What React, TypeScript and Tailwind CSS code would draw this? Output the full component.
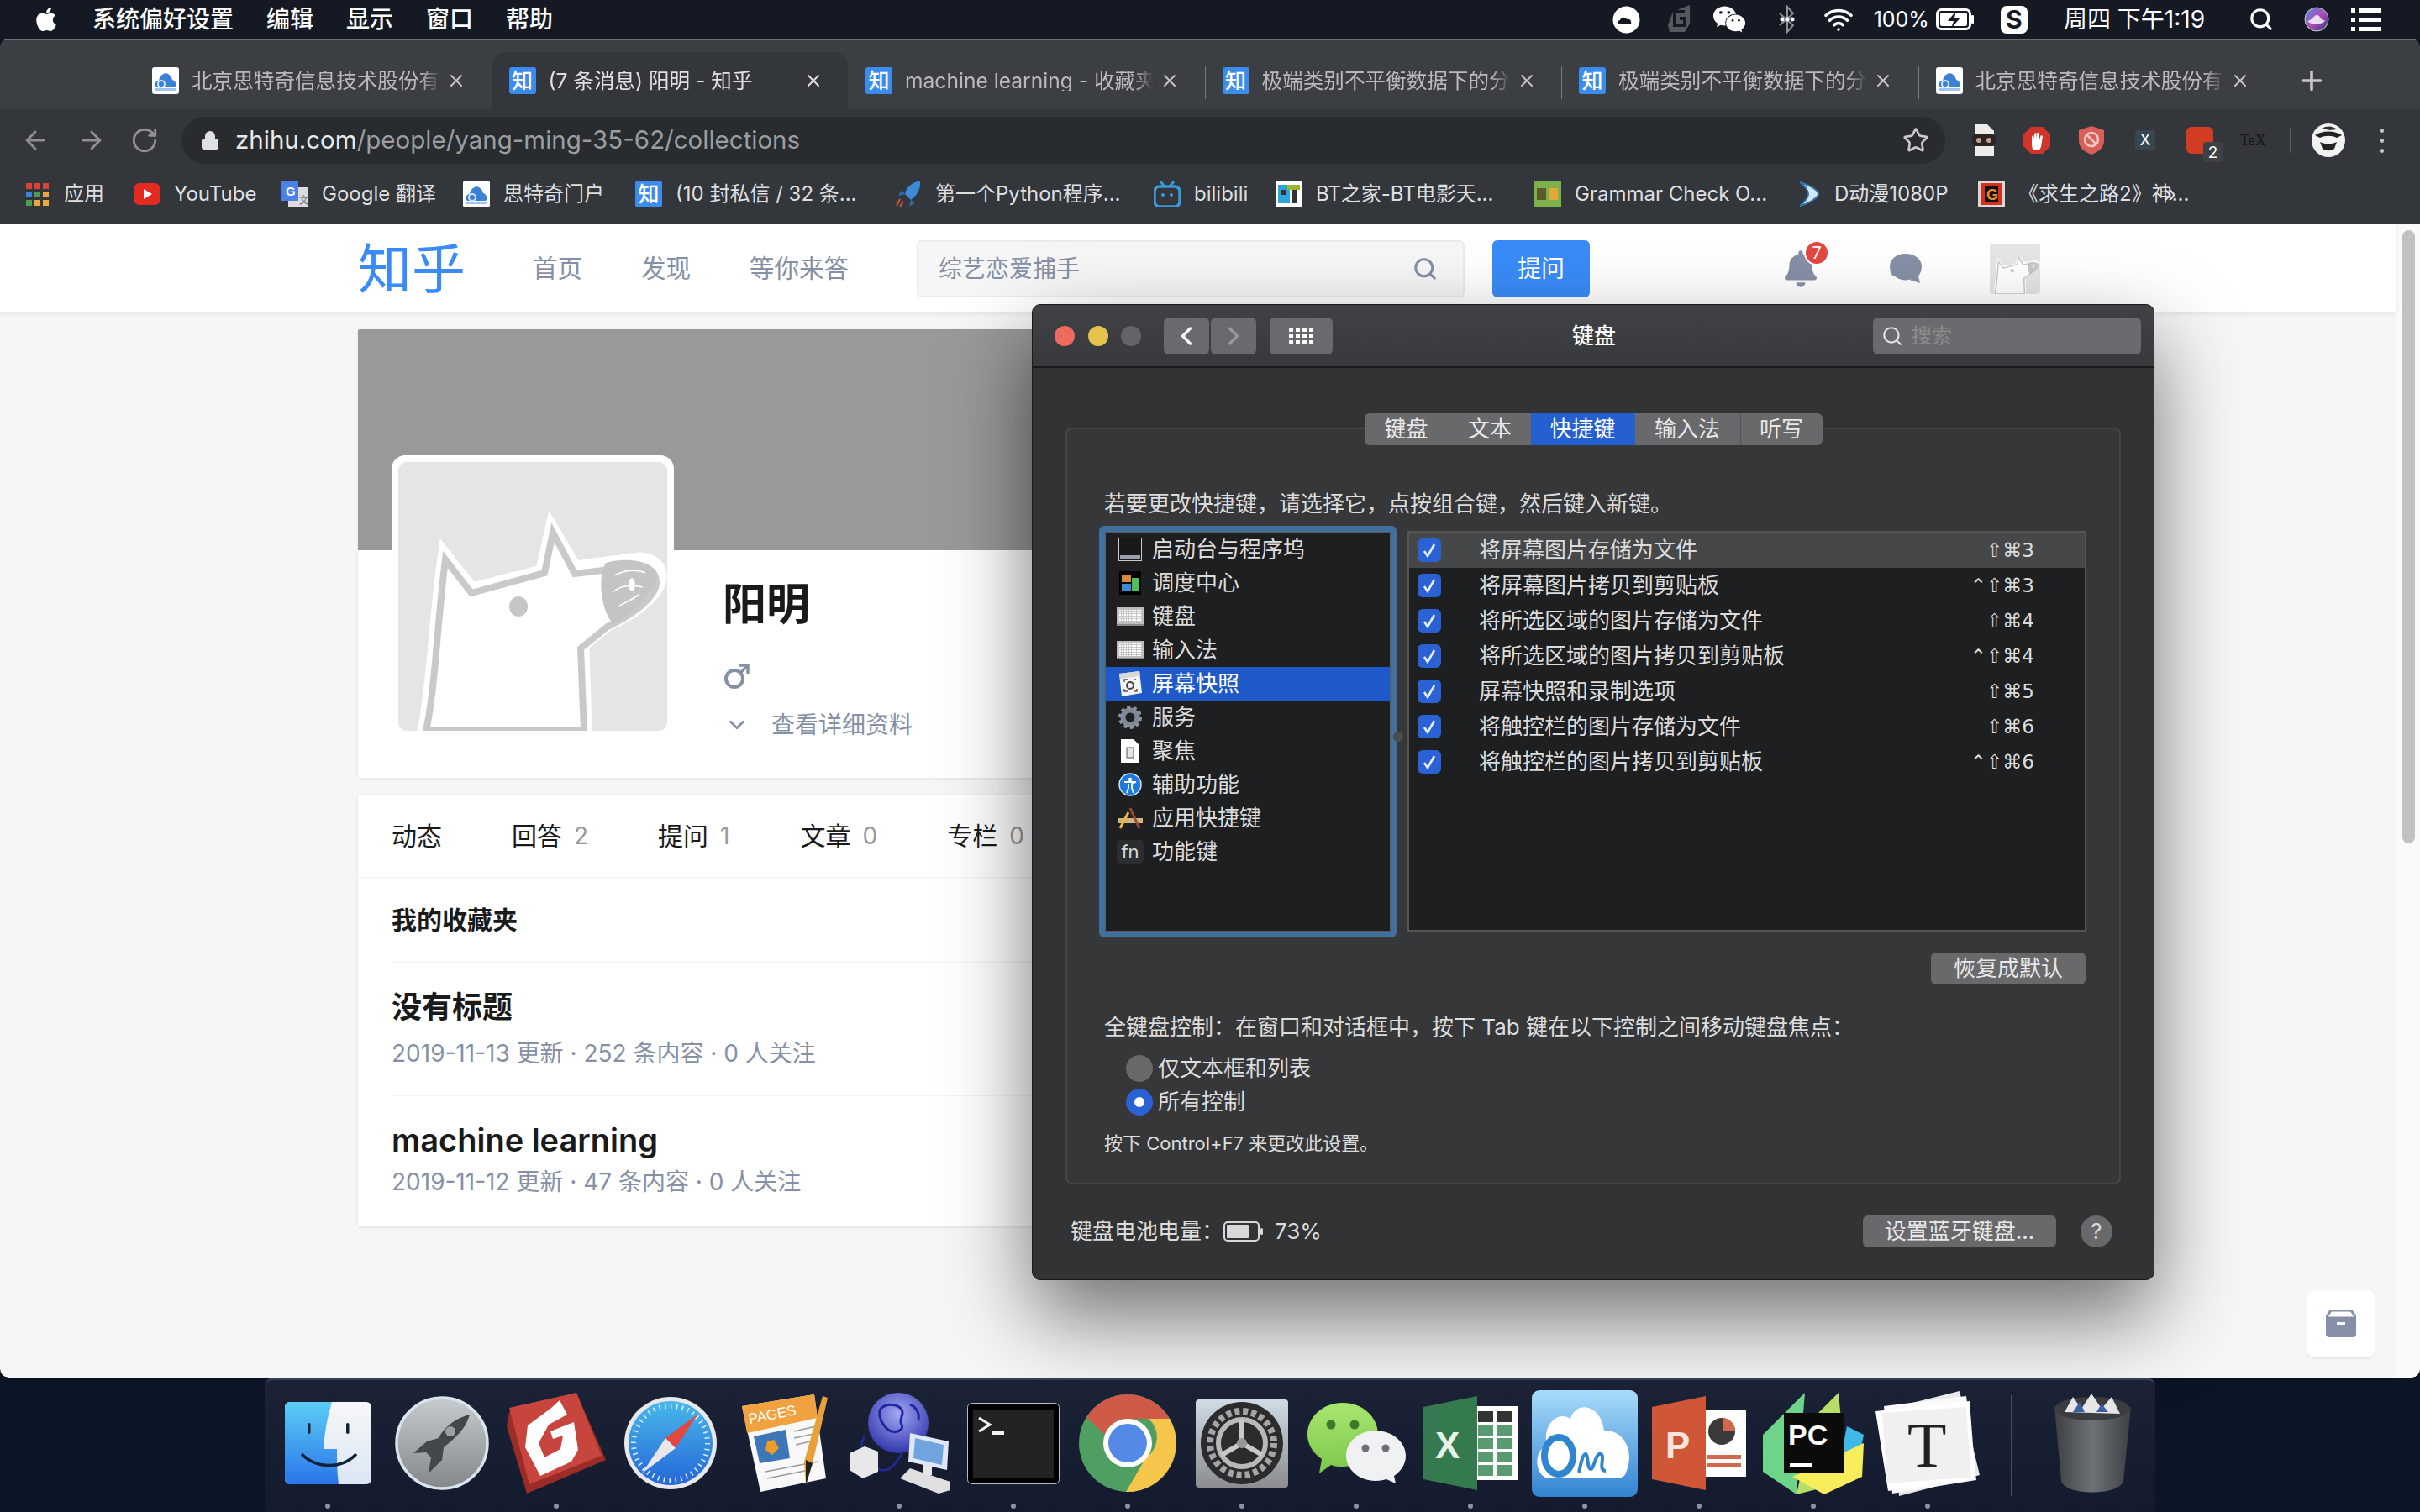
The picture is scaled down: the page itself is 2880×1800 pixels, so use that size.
import React from "react";
import { ArrowLeft, ArrowRight, RotateCw, Star, Search, X, Plus, Wifi, ChevronLeft, ChevronRight, ChevronDown, Lock } from "lucide-react";
import { FaApple, FaWeixin, FaBell } from "react-icons/fa";

const ZhiFav = () => (
  <div className="flex h-[32px] w-[32px] shrink-0 items-center justify-center rounded-[3px] bg-[#3b8ced] text-[25px] font-medium leading-none text-white">知</div>
);
const CloudFav = () => (
  <svg width="32" height="32" viewBox="0 0 32 32" className="shrink-0">
    <rect width="32" height="32" rx="3" fill="#fff" />
    <path d="M5 24c-3-3-1-8 3-8 1-5 4-8 8-9 5 1 7 4 8 8 4 1 6 6 3 9z" fill="#3b80d6" />
    <circle cx="11" cy="20" r="4" fill="none" stroke="#cfe3fa" strokeWidth="2" />
    <rect x="3" y="25" width="26" height="3" fill="#9ec5ef" />
  </svg>
);

const tabs: { k: string; t: string; active?: boolean }[] = [
  { k: "c", t: "北京思特奇信息技术股份有限公司" },
  { k: "z", t: "(7 条消息) 阳明 - 知乎", active: true },
  { k: "z", t: "machine learning - 收藏夹 - 知乎" },
  { k: "z", t: "极端类别不平衡数据下的分类问题" },
  { k: "z", t: "极端类别不平衡数据下的分类问题" },
  { k: "c", t: "北京思特奇信息技术股份有限公司" },
];

const MenuBar = () => (
  <div className="flex h-[46px] items-center bg-[#151923] text-white">
    <FaApple className="ml-[39px] h-[32px] w-[32px]" />
    <div className="ml-[39px] flex gap-[39px] text-[28px] font-medium leading-none">
      <span>系统偏好设置</span><span>编辑</span><span>显示</span><span>窗口</span><span>帮助</span>
    </div>
    <div className="ml-auto flex items-center">
      <svg width="33" height="33" viewBox="0 0 33 33"><circle cx="16.5" cy="16.5" r="16" fill="#fff" /><path d="M9 22c-3 0-3-5 0-5 1-4 7-4 8-1 4-1 6 2 5 6z" fill="#151923" /></svg>
      <svg width="30" height="34" viewBox="0 0 30 34" className="ml-[31px]"><path d="M8 8 28 0v22l-6 10H4l-2-8z" fill="#55585e" /><path d="M22 8H10v16h12v-8h-6" fill="none" stroke="#151923" strokeWidth="4" /></svg>
      <FaWeixin className="ml-[25px] h-[36px] w-[40px]" />
      <svg width="22" height="34" viewBox="0 0 22 34" className="ml-[38px]"><path d="m2 10 16 14-7 8V2l7 8L2 24" fill="none" stroke="#8f9298" strokeWidth="2" /><circle cx="5" cy="17" r="2.5" fill="#fff" /><circle cx="11" cy="17" r="2.5" fill="#fff" /><circle cx="17" cy="17" r="2.5" fill="#fff" /></svg>
      <Wifi className="ml-[30px] h-[36px] w-[40px]" strokeWidth={2.4} />
      <span className="ml-[22px] text-[25px] leading-none">100%</span>
      <svg width="46" height="26" viewBox="0 0 46 26" className="ml-[8px]"><rect x="1.5" y="1.5" width="39" height="23" rx="5" fill="none" stroke="#fff" strokeWidth="3" /><rect x="42" y="8" width="3" height="10" rx="1" fill="#fff" /><rect x="5" y="5" width="32" height="16" rx="2" fill="#fff" /><path d="M24 3 14 15h7l-3 9 11-13h-7z" fill="#151923" /></svg>
      <div className="ml-[31px] flex h-[33px] w-[32px] items-center justify-center rounded-[7px] bg-white text-[30px] font-bold leading-none text-[#151923]">S</div>
      <span className="ml-[43px] text-[28px] leading-none">周四 下午1:19</span>
      <Search className="ml-[52px] h-[32px] w-[30px]" strokeWidth={2.4} />
      <svg width="30" height="30" viewBox="0 0 30 30" className="ml-[36px]"><defs><linearGradient id="siri" x1="0" y1="0" x2="1" y2="1"><stop offset="0" stopColor="#4a8fe8" /><stop offset=".5" stopColor="#b04bb8" /><stop offset="1" stopColor="#2b3a78" /></linearGradient></defs><circle cx="15" cy="15" r="14" fill="url(#siri)" stroke="#ccc" /><path d="M4 17c6-1 8-8 12-7 4 1 4 8 10 6-6 6-16 7-22 1z" fill="#ffffffcc" /></svg>
      <div className="ml-[26px] mr-[46px] flex w-[36px] flex-col gap-[6px]">
        {[0, 1, 2].map((i) => (
          <div key={i} className="flex gap-[4px]"><div className="h-[5px] w-[5px] bg-white" /><div className="h-[5px] flex-1 bg-white" /></div>
        ))}
      </div>
    </div>
  </div>
);

const TabStrip = () => (
  <div className="flex h-[84px] items-end border-t-2 border-[#6d6f72] bg-[#3c3f42] pl-[160px]">
    <div className="flex h-[68px] w-[1px] items-center" />
    {tabs.map((t, i) => (
      <React.Fragment key={i}>
        <div className={`flex h-[68px] w-[423.5px] items-center pl-[20px] ${t.active ? "rounded-t-[16px] bg-[#33363a]" : ""}`}>
          {t.k === "z" ? <ZhiFav /> : <CloudFav />}
          <span className={`ml-[15px] w-[296px] overflow-hidden whitespace-nowrap text-[24.6px] leading-none [mask-image:linear-gradient(to_right,black_92%,transparent)] ${t.active ? "text-[#dfe0e1]" : "text-[#b9babc]"}`}>{t.t}</span>
          <X className={`ml-[7px] h-[24px] w-[24px] ${t.active ? "text-[#dfe0e1]" : "text-[#c4c5c6]"}`} strokeWidth={2} />
        </div>
        <div className={`mb-[12px] h-[40px] w-[1px] ${i >= 2 ? "bg-[#77797c]" : ""}`} />
      </React.Fragment>
    ))}
    <Plus className="mb-[16px] ml-[25px] h-[36px] w-[36px] text-[#c4c6c8]" strokeWidth={2.4} />
  </div>
);

const Ext = ({ children, cls }: { children: React.ReactNode; cls: string }) => <div className={`relative shrink-0 ${cls}`}>{children}</div>;

const Toolbar = () => (
  <div className="flex h-[65px] items-start bg-[#33363a] pt-[9px]">
    <div className="flex h-[56px] items-center text-[#8e9093]">
      <ArrowLeft className="ml-[25px] h-[34px] w-[34px]" strokeWidth={2} />
      <ArrowRight className="ml-[33px] h-[34px] w-[34px]" strokeWidth={2} />
      <RotateCw className="ml-[29px] h-[34px] w-[34px]" strokeWidth={2} />
    </div>
    <div className="ml-[27px] flex h-[56px] w-[2099px] items-center rounded-full bg-[#292c2f]">
      <Lock className="ml-[22px] h-[24px] w-[24px] text-[#dfe0e1]" fill="#dfe0e1" strokeWidth={2} />
      <span className="ml-[18px] text-[29.5px] leading-none text-[#e8e9ea]">zhihu.com<span className="text-[#9b9da0]">/people/yang-ming-35-62/collections</span></span>
      <Star className="ml-auto mr-[19px] h-[32px] w-[32px] text-[#c8c9cb]" strokeWidth={2} />
    </div>
    <div className="flex h-[56px] items-center">
      <Ext cls="ml-[32px] h-[38px] w-[28px]">
        <svg width="28" height="38" viewBox="0 0 28 38"><path d="M4 0h14l8 8v30H4z" fill="#ececec" /><rect x="0" y="12" width="28" height="14" rx="4" fill="#2c2323" /><circle cx="8" cy="19" r="3" fill="#c9a08a" /><circle cx="20" cy="19" r="3" fill="#c9a08a" /></svg>
      </Ext>
      <Ext cls="ml-[33px] h-[32px] w-[32px]">
        <svg width="32" height="32" viewBox="0 0 32 32"><path d="M9 0h14l9 9v14l-9 9H9l-9-9V9z" fill="#d0342b" /><path d="M10 20V11l2-1 1 5V8l2-1 1 7V7l2 0 1 8 2-5 2 1-2 13c-1 3-3 4-6 4-4 0-5-3-5-8z" fill="#fff" /></svg>
      </Ext>
      <Ext cls="ml-[34px] h-[34px] w-[30px]">
        <svg width="30" height="34" viewBox="0 0 30 34"><path d="M15 0 30 5v13c0 8-7 13-15 16C7 31 0 26 0 18V5z" fill="#d9605a" /><circle cx="15" cy="16" r="8" fill="none" stroke="#f3c7c4" strokeWidth="2.5" /><path d="m9 10 12 12" stroke="#f3c7c4" strokeWidth="2.5" /></svg>
      </Ext>
      <Ext cls="ml-[37px] flex h-[24px] w-[24px] items-center justify-center rounded-[3px] bg-[#37474f] text-[18px] leading-none text-white">
        <span>X</span>
      </Ext>
      <Ext cls="ml-[37px] h-[32px] w-[32px]">
        <div className="h-[32px] w-[32px] rounded-[6px] bg-[#d23c22]" />
        <div className="absolute left-[20px] top-[18px] flex h-[24px] w-[23px] items-center justify-center rounded-[3px] bg-[#3e4043] text-[19px] leading-none text-white">2</div>
      </Ext>
      <Ext cls="ml-[32px] h-[24px] w-[32px] text-[18px] leading-[24px] text-[#151515]">
        <span className="font-['Liberation_Serif',serif]">TeX</span>
      </Ext>
      <div className="ml-[27px] h-[30px] w-[1px] bg-[#5d5f62]" />
      <Ext cls="ml-[25px] h-[40px] w-[40px]">
        <svg width="40" height="40" viewBox="0 0 40 40"><circle cx="20" cy="20" r="20" fill="#f2f2f2" /><path d="M4 14c8-6 24-6 32 0l-6 3c-6-3-14-3-20 0zM10 22c6 3 14 3 20 0l-3 8c-4 3-10 3-14 0z" fill="#222" /><path d="M12 6c6-4 14-3 18 1l-8 1z" fill="#333" /></svg>
      </Ext>
      <div className="ml-[41px] flex flex-col gap-[7px]">
        {[0, 1, 2].map((i) => <div key={i} className="h-[5px] w-[5px] rounded-full bg-[#c4c5c7]" />)}
      </div>
    </div>
  </div>
);

const bookmarks: { w: string; i: React.ReactNode; t: string }[] = [
  { w: "w-[176px]", t: "YouTube", i: <svg width="32" height="32" viewBox="0 0 32 32"><rect y="3" width="32" height="26" rx="7" fill="#e32b22" /><path d="m12 10 10 6-10 6z" fill="#fff" /></svg> },
  { w: "w-[216px]", t: "Google 翻译", i: <svg width="32" height="32" viewBox="0 0 32 32"><rect x="8" y="8" width="24" height="24" fill="#dcdcdc" /><rect width="20" height="24" fill="#4b82e8" /><text x="5" y="18" fontSize="15" fill="#fff" fontWeight="700" fontFamily="Liberation Sans">G</text><text x="21" y="27" fontSize="12" fill="#666" fontFamily="Liberation Sans">文</text></svg> },
  { w: "w-[205px]", t: "思特奇门户", i: <CloudFav /> },
  { w: "w-[309px]", t: "(10 封私信 / 32 条...", i: <ZhiFav /> },
  { w: "w-[308px]", t: "第一个Python程序...", i: <svg width="32" height="32" viewBox="0 0 32 32"><path d="M30 0c1 10-3 17-11 23l-7-7C13 8 21 2 30 0z" fill="#3d8bd8" /><path d="M12 16 4 18l4-7zM19 23l-2 8 7-5z" fill="#2b6cb0" /><path d="m6 22-4 8M10 25l-4 6" stroke="#d9552e" strokeWidth="2" /></svg> },
  { w: "w-[145px]", t: "bilibili", i: <svg width="32" height="32" viewBox="0 0 32 32"><rect x="1" y="7" width="30" height="24" rx="6" fill="none" stroke="#3b99d4" strokeWidth="3.5" /><path d="m8 1 5 6M24 1l-5 6" stroke="#3b99d4" strokeWidth="3" /><circle cx="11" cy="17" r="2" fill="#3b99d4" /><circle cx="21" cy="17" r="2" fill="#3b99d4" /></svg> },
  { w: "w-[308px]", t: "BT之家-BT电影天...", i: <svg width="32" height="32" viewBox="0 0 32 32"><rect width="32" height="32" fill="#fff" /><rect x="3" y="5" width="14" height="22" fill="#2fa3dc" /><rect x="14" y="5" width="15" height="6" fill="#9ab52e" /><rect x="19" y="11" width="6" height="16" fill="#333" /><rect x="7" y="11" width="6" height="6" fill="#333" /></svg> },
  { w: "w-[309px]", t: "Grammar Check O...", i: <svg width="32" height="32" viewBox="0 0 32 32"><rect width="32" height="32" fill="#7db04a" /><rect x="3" y="9" width="11" height="14" fill="#5a5b2c" /><rect x="17" y="9" width="11" height="14" fill="#e2a93a" /></svg> },
  { w: "w-[219px]", t: "D动漫1080P", i: <svg width="30" height="32" viewBox="0 0 30 32"><path d="M6 2c14 4 22 10 22 14S16 28 6 30c6-5 10-10 10-14S12 6 6 2z" fill="#cfe7f6" stroke="#2f74a8" strokeWidth="2" /></svg> },
  { w: "w-[220px]", t: "《求生之路2》神...", i: <svg width="32" height="32" viewBox="0 0 32 32"><rect width="32" height="32" fill="#d9d9d9" /><rect x="3" y="3" width="26" height="26" fill="#d8301f" /><rect x="8" y="6" width="16" height="20" fill="#111" /><text x="10" y="23" fontSize="18" fontWeight="700" fill="#e88a2b" fontFamily="Liberation Sans">G</text></svg> },
];

const Bookmarks = () => (
  <div className="flex h-[72px] items-center bg-[#33363a] pb-[0px] text-[24px] leading-none text-[#dedfe0]">
    <div className="ml-[31px] flex w-[128px] items-center">
      <div className="grid w-[27px] grid-cols-3 gap-[3px]">
        {["#d9433a","#d9433a","#d9433a","#3f7fe0","#4e9a57","#e9a93c","#4e9a57","#e9a93c","#e9a93c"].map((c, i) => <div key={i} className="h-[7px] w-[7px]" style={{ background: c }} />)}
      </div>
      <span className="ml-[18px]">应用</span>
    </div>
    {bookmarks.map((b, i) => (
      <div key={i} className={`flex shrink-0 items-center gap-[16px] whitespace-nowrap ${b.w}`}>
        <div className="flex h-[32px] w-[32px] shrink-0 items-center justify-center">{b.i}</div>
        <span>{b.t}</span>
      </div>
    ))}
    <span className="ml-[1px] text-[26px]">»</span>
  </div>
);

const Dog = ({ size }: { size: number }) => (
  <svg width={size} height={size} viewBox="0 0 320 320" className="block">
    <rect width="320" height="320" fill="#e5e5e5" />
    <path d="M29 320C40 270 42 190 54 107l34 43 82-21 12-54 29 49 75-10c18 0 27 10 27 23 0 20-34 46-62 57l-30 24 3 102z" fill="#fff" stroke="#fff" strokeWidth="13" />
    <path d="M33 320C44 270 46 195 56 116l31 40 87-24 10-48 26 49 75-9c14 0 22 8 22 19 0 20-34 42-58 53l-32 26 4 98z" fill="#fff" stroke="#c9c9c9" strokeWidth="8" />
    <path d="M247 120c22-6 50-4 59 10 7 16-26 52-50 63-14-14-20-54-9-73z" fill="#c4c4c4" />
    <g fill="none" stroke="#fff" strokeWidth="1.6"><path d="M258 135c10-6 24-8 36-3M255 155c12-10 26-8 36-6M262 172c10-6 16-8 24-14" /><ellipse cx="278" cy="146" rx="3" ry="7" fill="#fff" /></g>
    <ellipse cx="143" cy="172" rx="11" ry="12" fill="#c6c6c6" />
  </svg>
);

const Header = () => (
  <div className="relative flex h-[105px] shrink-0 items-center bg-white pl-[426px] shadow-[0_1px_6px_rgba(26,26,26,0.1)]">
    <span className="w-[128px] text-[64px] leading-none text-[#3a8bf8]">知乎</span>
    <div className="ml-[80px] flex gap-[70px] text-[29.5px] leading-none text-[#8590a6]"><span>首页</span><span>发现</span><span>等你来答</span></div>
    <div className="ml-[81px] flex h-[68px] w-[652px] items-center rounded-[6px] border-2 border-[#ebebeb] bg-[#f6f6f6] pl-[24px] pr-[30px] text-[28px] leading-none text-[#8590a6]">
      <span>综艺恋爱捕手</span>
      <Search className="ml-auto h-[30px] w-[30px]" strokeWidth={2.4} />
    </div>
    <div className="ml-[33px] flex h-[68px] w-[116px] items-center justify-center rounded-[6px] bg-[#3a8bf8] text-[28px] leading-none text-white">提问</div>
    <div className="relative ml-[232px] h-[44px] w-[38px] text-[#8590a6]">
      <FaBell className="h-[44px] w-[38px]" />
      <div className="absolute left-[23px] top-[-12px] flex h-[30px] w-[30px] items-center justify-center rounded-full border-2 border-white bg-[#e2483f] text-[20px] leading-none text-white">7</div>
    </div>
    <svg width="40" height="36" viewBox="0 0 40 36" className="ml-[86px]"><path d="M20 0c11 0 19 7 19 15 0 5-2 9-4 12l2 8-9-3c-3 1-6 1-8 1C9 33 1 26 1 16S9 0 20 0z" fill="#8590a6" /><path d="M5 27c5 5 13 7 21 5" stroke="#fff" strokeWidth="3" fill="none" /></svg>
    <div className="ml-[80px] h-[60px] w-[60px] overflow-hidden rounded-[4px]"><Dog size={60} /></div>
  </div>
);

const Num = ({ c }: { c: string }) => <span className="ml-[14px] text-[28px] text-[#999]">{c}</span>;

const Page = () => (
  <div className="flex min-h-0 flex-1 overflow-hidden rounded-b-[10px] bg-[#f6f6f6]">
    <div className="flex min-w-0 flex-1 flex-col">
      <Header />
      <div className="ml-[426px] w-[2000px] pt-[20px]">
        <div className="overflow-hidden rounded-[2px] bg-white shadow-[0_1px_3px_rgba(26,26,26,0.1)]">
          <div className="h-[263px] bg-[#999999]" />
          <div className="flex h-[271px] pl-[40px]">
            <div className="-mt-[113px] h-[336px] w-[336px] shrink-0 rounded-[16px] bg-white p-[8px]">
              <div className="overflow-hidden rounded-[10px]"><Dog size={320} /></div>
            </div>
            <div className="ml-[58px] flex flex-col pt-[39px]">
              <div className="text-[52px] font-bold leading-[52px] text-[#1a1a1a]">阳明</div>
              <svg width="32" height="32" viewBox="0 0 32 32" className="ml-[1px] mt-[43px]"><circle cx="13" cy="19" r="10" fill="none" stroke="#8590a6" strokeWidth="4" /><path d="M20 12 29 3M19 3h10v10" fill="none" stroke="#8590a6" strokeWidth="3.5" /></svg>
              <div className="mt-[27px] flex h-[30px] items-center text-[28px] leading-none text-[#8590a6]">
                <ChevronDown className="ml-[2px] h-[30px] w-[30px]" strokeWidth={2.2} />
                <span className="ml-[26px]">查看详细资料</span>
              </div>
            </div>
          </div>
        </div>
        <div className="mt-[20px] flex gap-[24px]">
          <div className="h-[514px] w-[1384px] shrink-0 rounded-[2px] bg-white shadow-[0_1px_3px_rgba(26,26,26,0.1)]">
            <div className="flex h-[100px] items-center border-b-2 border-[#f6f6f6] pl-[40px] text-[30px] leading-none text-[#1a1a1a]">
              <span>动态</span>
              <span className="ml-[83px]">回答</span><Num c="2" />
              <span className="ml-[83px]">提问</span><Num c="1" />
              <span className="ml-[84px]">文章</span><Num c="0" />
              <span className="ml-[83px]">专栏</span><Num c="0" />
            </div>
            <div className="flex h-[100px] items-center text-[30px] font-semibold leading-none text-[#1a1a1a] ml-[40px] border-b-2 border-[#f6f6f6]">我的收藏夹</div>
            <div className="ml-[40px] flex h-[159px] flex-col border-b-2 border-[#f6f6f6] pt-[30px]">
              <div className="text-[36px] font-bold leading-[46px] text-[#1a1a1a]">没有标题</div>
              <div className="mt-[12px] text-[28px] leading-[40px] text-[#8590a6]">2019-11-13 更新 · 252 条内容 · 0 人关注</div>
            </div>
            <div className="ml-[40px] flex flex-col pt-[29px]">
              <div className="text-[38px] font-semibold leading-[46px] text-[#1a1a1a]">machine learning</div>
              <div className="mt-[7px] text-[28px] leading-[40px] text-[#8590a6]">2019-11-12 更新 · 47 条内容 · 0 人关注</div>
            </div>
          </div>
          <div className="w-[592px] pt-[67px]">
            <div className="flex h-[180px] rounded-[2px] bg-white shadow-[0_1px_3px_rgba(26,26,26,0.1)]">
              {[["关注了", "70"], ["关注者", "2"]].map(([a, b], i) => (
                <div key={a} className={`flex flex-1 flex-col items-center pt-[30px] ${i === 0 ? "border-r-2 border-[#ebebeb]" : ""}`}>
                  <span className="text-[28px] leading-[34px] text-[#8590a6]">{a}</span>
                  <span className="mt-[14px] text-[36px] font-bold leading-[36px] text-[#1a1a1a]">{b}</span>
                </div>
              ))}
            </div>
          </div>
        </div>
      </div>
    </div>
    <div className="flex w-[29px] shrink-0 justify-center border-l border-[#e8e8e8] bg-[#fafafa] pt-[7px]">
      <div className="h-[730px] w-[15px] rounded-full bg-[#c1c1c1]" />
    </div>
  </div>
);

const CornerBtn = () => (
  <div className="absolute left-[2746px] top-[1536px] flex h-[80px] w-[80px] items-center justify-center rounded-[8px] bg-white shadow-[0_1px_3px_rgba(26,26,26,0.1)]">
    <svg width="36" height="32" viewBox="0 0 36 32"><path d="M6 0h24l6 9H0z" fill="none" stroke="#8590a6" strokeWidth="3" /><path d="M0 9h36v19a4 4 0 0 1-4 4H4a4 4 0 0 1-4-4z" fill="#8590a6" /><rect x="13" y="14" width="10" height="3" fill="#fff" /></svg>
  </div>
);

/* ---------- keyboard prefs ---------- */
const KeyIcon = () => (
  <svg width="32" height="24" viewBox="0 0 32 24"><defs><pattern id="keys" width="3" height="3" patternUnits="userSpaceOnUse"><rect width="2.2" height="2.2" fill="#fdfdfd" /></pattern></defs><rect width="32" height="22" fill="#bdbdbd" y="1" /><rect x="2" y="4" width="28" height="15" fill="url(#keys)" /><rect y="21" width="32" height="2" fill="#8b8b8b" /></svg>
);
const sideItems: { t: string; i: React.ReactNode; sel?: boolean }[] = [
  { t: "启动台与程序坞", i: <svg width="28" height="28" viewBox="0 0 28 28"><rect x=".5" y=".5" width="27" height="27" fill="#18191b" stroke="#c9c9c9" /><rect x="2" y="21" width="24" height="5" fill="#9aa3ad" /></svg> },
  { t: "调度中心", i: <svg width="26" height="28" viewBox="0 0 26 28"><rect width="26" height="28" fill="#000" /><rect x="3" y="4" width="11" height="9" fill="#d78a3b" /><rect x="3" y="15" width="11" height="9" fill="#3d8ad8" /><rect x="15" y="8" width="9" height="15" fill="#4cc05a" /></svg> },
  { t: "键盘", i: <KeyIcon /> },
  { t: "输入法", i: <KeyIcon /> },
  { t: "屏幕快照", sel: true, i: <svg width="28" height="30" viewBox="0 0 28 30"><path d="M1 3 25 0l3 26-24 4z" fill="#f4f4f4" /><path d="M1 3 25 0l1 6L2 9z" fill="#d8d8d8" /><circle cx="14" cy="17" r="4" fill="none" stroke="#444" strokeWidth="2" /><path d="M7 13v-3h4M21 10h-3M7 21v3h4M22 21v3h-4" fill="none" stroke="#555" strokeWidth="1.4" /></svg> },
  { t: "服务", i: <svg width="30" height="30" viewBox="0 0 30 30"><circle cx="15" cy="15" r="8.5" fill="none" stroke="#7f8798" strokeWidth="6" /><circle cx="15" cy="15" r="12" fill="none" stroke="#8d94a5" strokeWidth="4" strokeDasharray="4 3.5" /></svg> },
  { t: "聚焦", i: <svg width="22" height="28" viewBox="0 0 22 28"><path d="M0 0h15l7 7v21H0z" fill="#fff" /><rect x="7" y="10" width="8" height="12" fill="#e5e5e5" stroke="#555" /></svg> },
  { t: "辅助功能", i: <svg width="28" height="28" viewBox="0 0 28 28"><circle cx="14" cy="14" r="13" fill="#1f7ae0" stroke="#cfe4fb" strokeWidth="1.5" /><circle cx="14" cy="8" r="2.2" fill="#fff" /><path d="M7 11h14l-5 2v5l2 6M12 13v5l-2 6" fill="none" stroke="#fff" strokeWidth="1.8" /></svg> },
  { t: "应用快捷键", i: <svg width="30" height="26" viewBox="0 0 30 26"><rect x="0" y="13" width="30" height="6" fill="#d6b27c" /><path d="m15 1 11 24" stroke="#9b4a3a" strokeWidth="3" /><path d="M13 6 3 25" stroke="#e8b93c" strokeWidth="3" /></svg> },
  { t: "功能键", i: <div className="flex h-[28px] w-[32px] items-center justify-center rounded-[5px] bg-[#2c2d2f] text-[22px] leading-none text-[#d8d8d8]">fn</div> },
];
const shortcuts: [string, string][] = [
  ["将屏幕图片存储为文件", "⇧⌘3"],
  ["将屏幕图片拷贝到剪贴板", "⌃⇧⌘3"],
  ["将所选区域的图片存储为文件", "⇧⌘4"],
  ["将所选区域的图片拷贝到剪贴板", "⌃⇧⌘4"],
  ["屏幕快照和录制选项", "⇧⌘5"],
  ["将触控栏的图片存储为文件", "⇧⌘6"],
  ["将触控栏的图片拷贝到剪贴板", "⌃⇧⌘6"],
];
const segs = [
  { t: "键盘", w: "w-[101px]" },
  { t: "文本", w: "w-[97px]" },
  { t: "快捷键", w: "w-[124px]", a: true },
  { t: "输入法", w: "w-[126px]" },
  { t: "听写", w: "w-[97px]" },
];

const Prefs = () => (
  <div className="absolute left-[1228px] top-[362px] z-10 flex h-[1162px] w-[1336px] flex-col overflow-hidden rounded-[10px] border border-[#1a1a1a] bg-[#323335] shadow-[0_44px_100px_rgba(0,0,0,0.55)]">
    <div className="relative flex h-[75px] shrink-0 items-center border-b-2 border-[#17181a] bg-gradient-to-b from-[#404245] to-[#38393c] pl-[26px]">
      <div className="h-[24px] w-[24px] rounded-full bg-[#ee6a5e]" />
      <div className="ml-[16px] h-[24px] w-[24px] rounded-full bg-[#e6c34c]" />
      <div className="ml-[15px] h-[24px] w-[24px] rounded-full bg-[#636466]" />
      <div className="ml-[27px] flex h-[44px] w-[54px] items-center justify-center rounded-[6px] bg-[#696a6d]"><ChevronLeft className="h-[36px] w-[36px] text-white" strokeWidth={2.2} /></div>
      <div className="ml-[2px] flex h-[44px] w-[54px] items-center justify-center rounded-[6px] bg-[#696a6d]"><ChevronRight className="h-[36px] w-[36px] text-[#97989a]" strokeWidth={2.2} /></div>
      <div className="ml-[16px] flex h-[44px] w-[75px] items-center justify-center rounded-[6px] bg-[#696a6d]">
        <div className="grid grid-cols-4 gap-[3px]">{Array.from({ length: 12 }).map((_, i) => <div key={i} className="h-[4px] w-[5px] bg-white" />)}</div>
      </div>
      <div className="absolute left-[642px] w-[52px] text-[26px] font-medium leading-none text-white">键盘</div>
      <div className="ml-auto mr-[15px] flex h-[44px] w-[319px] items-center rounded-[6px] bg-[#6a6b6e] pl-[10px] text-[24px] leading-none text-[#8a8b8d]">
        <Search className="h-[26px] w-[26px] text-[#e2e2e2]" strokeWidth={2} />
        <span className="ml-[10px]">搜索</span>
      </div>
    </div>
    <div className="mx-[39px] mt-[71px] flex h-[901px] flex-col rounded-[8px] border-2 border-[#454648] bg-[#363739] text-[26px] leading-none text-[#dcdcdc]">
      <div className="-mt-[19px] flex justify-center">
        <div className="flex h-[38px] overflow-hidden rounded-[6px] bg-[#69696c]">
          {segs.map((s, i) => (
            <div key={s.t} className={`flex items-center justify-center text-[#e8e8e8] ${s.w} ${s.a ? "bg-[#2460d0] text-white" : ""} ${i === 0 || i === 3 ? "border-r border-[#545457]" : ""}`}>{s.t}</div>
          ))}
        </div>
      </div>
      <div className="ml-[44px] mt-[52px] leading-[36px]">若要更改快捷键，请选择它，点按组合键，然后键入新键。</div>
      <div className="relative ml-[38px] mt-[8px] flex items-start">
        <div className="h-[490px] w-[354px] shrink-0 rounded-[6px] bg-[#41709e] p-[7px]">
          <div className="h-[476px] border border-[#5a5b5d] bg-[#1e1f21]">
            {sideItems.map((s) => (
              <div key={s.t} className={`flex h-[40px] items-center ${s.sel ? "bg-[#1f59c8] text-white" : ""}`}>
                <div className="flex w-[55px] shrink-0 justify-center pl-[3px]">{s.i}</div>
                <span>{s.t}</span>
              </div>
            ))}
          </div>
        </div>
        <div className="absolute left-[350px] top-[245px] h-[12px] w-[12px] rounded-full bg-[#4a4b4d]" />
        <div className="ml-[13px] mt-[6px] h-[477px] w-[808px] border-2 border-[#545557] bg-[#1e1f21]">
          {shortcuts.map(([t, k], i) => (
            <div key={t} className={`flex h-[42px] items-center pl-[10px] pr-[60px] ${i === 0 ? "bg-[#464748]" : ""}`}>
              <div className="flex h-[28px] w-[28px] shrink-0 items-center justify-center rounded-[6px] bg-[#2a62d5]">
                <svg width="20" height="20" viewBox="0 0 20 20"><path d="m4 11 4 6 8-14" fill="none" stroke="#e8eefc" strokeWidth="2.6" /></svg>
              </div>
              <span className="ml-[45px]">{t}</span>
              <span className="ml-auto font-['DejaVu_Sans',sans-serif] text-[23px] text-[#dcdcdc]">{k}</span>
            </div>
          ))}
        </div>
      </div>
      <div className="mr-[40px] mt-[18px] flex justify-end">
        <div className="flex h-[38px] w-[184px] items-center justify-center rounded-[6px] bg-[#69696c] text-[#e8e8e8]">恢复成默认</div>
      </div>
      <div className="ml-[44px] mt-[33px] leading-[36px]">全键盘控制：在窗口和对话框中，按下 Tab 键在以下控制之间移动键盘焦点：</div>
      <div className="ml-[70px] mt-[15px] flex items-center">
        <div className="h-[32px] w-[32px] rounded-full bg-[#69696c]" />
        <span className="ml-[6px]">仅文本框和列表</span>
      </div>
      <div className="ml-[70px] mt-[8px] flex items-center">
        <div className="flex h-[32px] w-[32px] items-center justify-center rounded-full bg-[#2a62d5]"><div className="h-[12px] w-[12px] rounded-full bg-white" /></div>
        <span className="ml-[6px]">所有控制</span>
      </div>
      <div className="ml-[44px] mt-[17px] text-[22px] leading-[32px]">按下 Control+F7 来更改此设置。</div>
    </div>
    <div className="mt-[37px] flex items-center pl-[45px] text-[26px] leading-none text-[#dcdcdc]">
      <span>键盘电池电量：</span>
      <svg width="48" height="24" viewBox="0 0 48 24" className="-ml-[0px]"><rect x="1" y="1" width="41" height="22" rx="4" fill="none" stroke="#d8d8d8" strokeWidth="2" /><rect x="4" y="4" width="26" height="16" rx="1" fill="#d8d8d8" /><rect x="44" y="8" width="3" height="8" rx="1.5" fill="#d8d8d8" /></svg>
      <span className="ml-[13px]">73%</span>
      <div className="ml-auto flex h-[38px] w-[230px] items-center justify-center rounded-[6px] bg-[#69696c] text-[#e8e8e8]">设置蓝牙键盘...</div>
      <div className="ml-[29px] mr-[49px] flex h-[38px] w-[38px] items-center justify-center rounded-full bg-[#69696c] text-[#d8d8d8]">?</div>
    </div>
  </div>
);

/* ---------- dock ---------- */
const Finder = () => (
  <svg width="103" height="98" viewBox="0 0 103 98">
    <defs><linearGradient id="fl" x1="0" y1="0" x2="0" y2="1"><stop offset="0" stopColor="#5ccdf6" /><stop offset="1" stopColor="#2a75ea" /></linearGradient><linearGradient id="fr" x1="0" y1="0" x2="0" y2="1"><stop offset="0" stopColor="#f6f7f8" /><stop offset="1" stopColor="#dce7f4" /></linearGradient></defs>
    <rect width="103" height="98" rx="6" fill="url(#fr)" />
    <path d="M6 0h50c-5 18-9 36-10 56h16c0 14 0 28 2 42H6a6 6 0 0 1-6-6V6a6 6 0 0 1 6-6z" fill="url(#fl)" />
    <rect x="27" y="25" width="3.5" height="13" rx="1.7" fill="#123" /><rect x="73" y="25" width="3.5" height="13" rx="1.7" fill="#123" />
    <path d="M20 62c18 18 48 18 65 0" fill="none" stroke="#10223a" strokeWidth="3.5" />
  </svg>
);
const Rocket = () => (
  <svg width="112" height="112" viewBox="0 0 112 112">
    <defs><linearGradient id="rk" x1="0" y1="0" x2="0" y2="1"><stop offset="0" stopColor="#c6ccd0" /><stop offset="1" stopColor="#83878a" /></linearGradient></defs>
    <circle cx="56" cy="56" r="54" fill="url(#rk)" stroke="#d7e5ec" strokeWidth="3.5" />
    <path d="M89 22C76 25 60 34 52 50L38 54 22 68l15-1 6 6-3 19 16-16 2-15C72 50 85 38 89 22z" fill="#42474a" />
    <circle cx="66" cy="42" r="6" fill="#9aa0a4" />
  </svg>
);
const Foxmail = () => (
  <svg width="118" height="120" viewBox="0 0 118 120">
    <path d="M3 23 83 0l35 80-94 40L0 40z" fill="#9a2d26" />
    <path d="M3 18 83 0l30 75-86 34z" fill="#c8453d" />
    <path d="M63 9 72 26 50 38 38 60l7 17 19-10 3-16-12 4-3-9 28-11 5 33-8 14-37 17-18-34 3-26 27-20z" fill="#fff" />
  </svg>
);
const Safari = () => (
  <svg width="112" height="112" viewBox="0 0 112 112">
    <defs><linearGradient id="sf" x1="0" y1="0" x2="0" y2="1"><stop offset="0" stopColor="#48b8ea" /><stop offset="1" stopColor="#2566d8" /></linearGradient></defs>
    <circle cx="56" cy="56" r="55" fill="#e6e8ea" />
    <circle cx="56" cy="56" r="50" fill="url(#sf)" />
    <circle cx="56" cy="56" r="44" fill="none" stroke="#dff0fb" strokeWidth="6" strokeDasharray="1.5 5.4" />
    <path d="M88 22 62 62 50 50z" fill="#e1483e" /><path d="M22 92 50 50 62 62z" fill="#e8e8e8" />
  </svg>
);
const Pages = () => (
  <svg width="102" height="116" viewBox="0 0 102 116">
    <path d="M0 14 86 0l14 100-78 16z" fill="#f8f8f8" />
    <path d="M0 14 86 0l4 28-84 18z" fill="#f0a240" />
    <text x="9" y="35" fontSize="17" fill="#fff" transform="rotate(-11 9 35)" fontFamily="Liberation Sans">PAGES</text>
    <path d="M14 50 52 42l5 34-36 6z" fill="#3e77b8" /><path d="m30 56 8-2 6 10-8 8-8-6z" fill="#eb9c2a" />
    <path d="M62 44 88 38M62 52 90 46M64 60 90 54M28 92 90 80M30 100 80 90" stroke="#9a9a9a" strokeWidth="1.6" />
    <path d="M96 2 102 4 84 82 76 108 74 80z" fill="#e9a038" /><path d="M76 78 84 82 76 108z" fill="#222" />
  </svg>
);
const Network = () => (
  <svg width="123" height="120" viewBox="0 0 123 120">
    <defs><radialGradient id="gb" cx=".5" cy=".35" r=".7"><stop offset="0" stopColor="#a4a8f4" /><stop offset="1" stopColor="#2a2ea8" /></radialGradient></defs>
    <circle cx="60" cy="36" r="36" fill="url(#gb)" />
    <path d="M40 18c8-6 20-4 24 2s-4 12 0 18-8 12-16 6-14-20-8-26zM74 14c6 2 12 10 10 18" fill="none" stroke="#2226a0" strokeWidth="3" />
    <path d="M20 52C8 70 30 90 40 92c14 2 20-14 26-22" fill="none" stroke="#222a9a" strokeWidth="2.5" />
    <path d="m2 72 18-8 16 6v24l-18 8-16-10z" fill="#e8e8e8" />
    <path d="M74 48 120 58 118 92 72 82z" fill="#dfe8f4" /><path d="M80 54 114 62 112 86 78 78z" fill="#6fa4de" />
    <path d="M62 102 74 90 122 106 122 116 108 120z" fill="#dfdfdf" />
    <rect x="90" y="86" width="10" height="12" fill="#e6e6e6" />
  </svg>
);
const Terminal = () => (
  <svg width="110" height="97" viewBox="0 0 110 97">
    <rect x=".5" y=".5" width="109" height="96" rx="5" fill="#000" stroke="#b9bcc2" />
    <rect x="7" y="8" width="96" height="81" fill="#232323" />
    <path d="m14 18 13 8-13 8" fill="none" stroke="#f2f2f2" strokeWidth="3" />
    <rect x="30" y="34" width="14" height="4" fill="#f2f2f2" />
  </svg>
);
const Chrome = () => (
  <svg width="118" height="118" viewBox="0 0 118 118">
    <circle cx="59" cy="59" r="58" fill="#4f9e62" />
    <path d="M59 1a58 58 0 0 1 50 29H59a29 29 0 0 0-27 19L10 28A58 58 0 0 1 59 1z" fill="#d05a48" />
    <path d="M109 30a58 58 0 0 1-52 87l24-41a29 29 0 0 0 3-46z" fill="#f6c54c" />
    <circle cx="59" cy="59" r="29" fill="#fff" />
    <circle cx="59" cy="59" r="23" fill="#5589e8" />
  </svg>
);
const SysPref = () => (
  <svg width="110" height="105" viewBox="0 0 110 105">
    <defs><linearGradient id="sp" x1="0" y1="0" x2="0" y2="1"><stop offset="0" stopColor="#cfdce6" /><stop offset="1" stopColor="#8b8d8f" /></linearGradient></defs>
    <rect width="110" height="105" rx="4" fill="url(#sp)" />
    <circle cx="55" cy="52" r="49" fill="#2c2c2e" />
    <circle cx="55" cy="52" r="38" fill="none" stroke="#a5a5a7" strokeWidth="8" strokeDasharray="6 4" />
    <circle cx="55" cy="52" r="28" fill="none" stroke="#b9b9bb" strokeWidth="6" />
    <path d="M55 52V24M55 52 31 66M55 52l24 14" stroke="#c9c9cb" strokeWidth="6" />
    <circle cx="55" cy="52" r="6" fill="#999" />
  </svg>
);
const WeChat = () => (
  <svg width="117" height="96" viewBox="0 0 117 96">
    <defs><linearGradient id="wa" x1="0" y1="0" x2="0" y2="1"><stop offset="0" stopColor="#a8e66e" /><stop offset="1" stopColor="#7cc64e" /></linearGradient></defs>
    <path d="M42 0c24 0 42 17 42 38s-18 38-42 38c-5 0-9 0-14-2L14 84l3-17C7 60 0 50 0 38 0 17 18 0 42 0z" fill="url(#wa)" />
    <circle cx="28" cy="26" r="5.5" fill="#3a7a2c" /><circle cx="56" cy="26" r="5.5" fill="#3a7a2c" />
    <path d="M81 33c20 0 36 14 36 30 0 10-6 19-14 24l2 9-11-5c-4 1-8 2-13 2-20 0-35-14-35-30s15-30 35-30z" fill="#f0f1f3" />
    <circle cx="69" cy="54" r="4.5" fill="#6d7075" /><circle cx="93" cy="54" r="4.5" fill="#6d7075" />
  </svg>
);
const Excel = () => (
  <svg width="112" height="112" viewBox="0 0 112 112">
    <rect x="60" y="12" width="52" height="88" fill="#fff" />
    {[0, 1, 2, 3, 4].map((r) => [0, 1].map((c) => <rect key={`${r}${c}`} x={65 + c * 22} y={18 + r * 16} width="18" height="13" fill={r === 0 ? "#333" : "#5a9a70"} />))}
    <path d="M0 13 64 0v112L0 99z" fill="#35794f" />
    <text x="14" y="74" fontSize="44" fontWeight="700" fill="#e5f2e8" fontFamily="Liberation Sans">X</text>
  </svg>
);
const OneCloud = () => (
  <svg width="126" height="127" viewBox="0 0 126 127">
    <defs><linearGradient id="oc" x1="0" y1="0" x2="0" y2="1"><stop offset="0" stopColor="#a8dcfa" /><stop offset="1" stopColor="#3383d2" /></linearGradient></defs>
    <rect width="126" height="127" rx="9" fill="url(#oc)" />
    <path d="M16 104C2 96 4 70 18 66 12 40 32 24 46 34 52 12 82 16 86 48c22-2 38 24 26 50-1 4-4 6-8 6z" fill="#fff" />
    <ellipse cx="32" cy="78" rx="17" ry="22" fill="none" stroke="#2f86cf" strokeWidth="8" />
    <path d="M56 98c3-14 5-22 8-22s2 18 6 18 6-20 12-18-4 20 6 20" fill="none" stroke="#2f86cf" strokeWidth="4" />
  </svg>
);
const PPT = () => (
  <svg width="112" height="112" viewBox="0 0 112 112">
    <rect x="60" y="16" width="52" height="80" fill="#fff" />
    <circle cx="83" cy="42" r="16" fill="#3a3a3a" /><path d="M85 26a16 16 0 0 1 14 16H85z" fill="#d2694c" />
    <rect x="66" y="70" width="40" height="5" fill="#d2694c" /><rect x="66" y="80" width="40" height="5" fill="#d2694c" />
    <path d="M0 13 64 0v112L0 99z" fill="#cf5636" />
    <text x="16" y="74" fontSize="44" fontWeight="700" fill="#f6e4dd" fontFamily="Liberation Sans">P</text>
  </svg>
);
const PyCharm = () => (
  <svg width="120" height="121" viewBox="0 0 120 121">
    <path d="M50 0 0 50l0 44 40 27z" fill="#6ed48a" />
    <path d="M90 0 60 30 40 121l60-15z" fill="#b8de6a" />
    <path d="M100 40 120 50 110 100 92 80z" fill="#3fb8e8" />
    <path d="M35 100 120 60l-2 40-45 21z" fill="#f8ee5c" />
    <rect x="25" y="24" width="72" height="72" fill="#0b0b0b" />
    <text x="30" y="62" fontSize="34" fontWeight="700" fill="#fff" fontFamily="Liberation Sans">PC</text>
    <rect x="32" y="84" width="26" height="5" fill="#fff" />
  </svg>
);
const Typora = () => (
  <svg width="124" height="125" viewBox="0 0 124 125">
    <path d="M20 20 100 0l24 100-96 25z" fill="#e8e8e8" />
    <path d="M10 18 108 6 120 106 20 122z" fill="#fafafa" />
    <path d="M0 24 112 12l7 92-104 15z" fill="#fff" />
    <rect x="8" y="26" width="100" height="84" fill="#f0f0f0" transform="rotate(-4 8 26)" />
    <text x="38" y="90" fontSize="76" fill="#222" fontFamily="Liberation Serif">T</text>
  </svg>
);
const Trash = () => (
  <svg width="91" height="118" viewBox="0 0 91 118">
    <defs><linearGradient id="tr" x1="0" y1="0" x2="1" y2="0"><stop offset="0" stopColor="#3c3f43" /><stop offset=".5" stopColor="#6e7175" /><stop offset="1" stopColor="#3c3f43" /></linearGradient></defs>
    <path d="M0 16h91l-9 88c-4 18-70 18-74 0z" fill="url(#tr)" />
    <ellipse cx="45" cy="18" rx="45" ry="14" fill="#3a3c40" />
    <path d="M12 22 22 4l10 14 12-18 12 18 12-14 10 20z" fill="#e6e6e6" />
    <path d="M22 22 30 10l6 12zM50 22l6-10 8 10z" fill="#3a5ea8" />
  </svg>
);

const dock: { c: React.ReactNode; d: boolean }[] = [
  { c: <Finder />, d: true }, { c: <Rocket />, d: false }, { c: <Foxmail />, d: true }, { c: <Safari />, d: false },
  { c: <Pages />, d: false }, { c: <Network />, d: true }, { c: <Terminal />, d: true }, { c: <Chrome />, d: true },
  { c: <SysPref />, d: true }, { c: <WeChat />, d: true }, { c: <Excel />, d: true }, { c: <OneCloud />, d: true },
  { c: <PPT />, d: true }, { c: <PyCharm />, d: true }, { c: <Typora />, d: true },
];

const Dock = () => (
  <div className="relative z-20 ml-[315px] flex h-[160px] w-[2250px] rounded-t-[10px] border-t-[3px] border-[#3a3f4e] bg-gradient-to-b from-[#1c2236] to-[#151b2f] pl-[7px]">
    {dock.map((d, i) => (
      <div key={i} className="flex w-[136px] shrink-0 flex-col items-center">
        <div className="mt-[8px] flex h-[134px] items-center justify-center">{d.c}</div>
        <div className={`mt-[5px] h-[6px] w-[6px] rounded-full ${d.d ? "bg-[#8c93a8]" : ""}`} />
      </div>
    ))}
    <div className="ml-[31px] mt-[18px] h-[120px] w-[1px] bg-[#4a4f60]" />
    <div className="ml-[51px] mt-[8px] flex h-[134px] items-center"><Trash /></div>
  </div>
);

export default function App() {
  return (
    <div className="relative h-[1800px] w-[2880px] overflow-hidden bg-[#0c1526] font-[Inter,'Noto_Sans_CJK_SC',sans-serif]">
      <MenuBar />
      <div className="flex h-[1594px] flex-col overflow-hidden rounded-[10px]">
        <TabStrip />
        <Toolbar />
        <Bookmarks />
        <Page />
      </div>
      <CornerBtn />
      <Dock />
      <Prefs />
    </div>
  );
}
